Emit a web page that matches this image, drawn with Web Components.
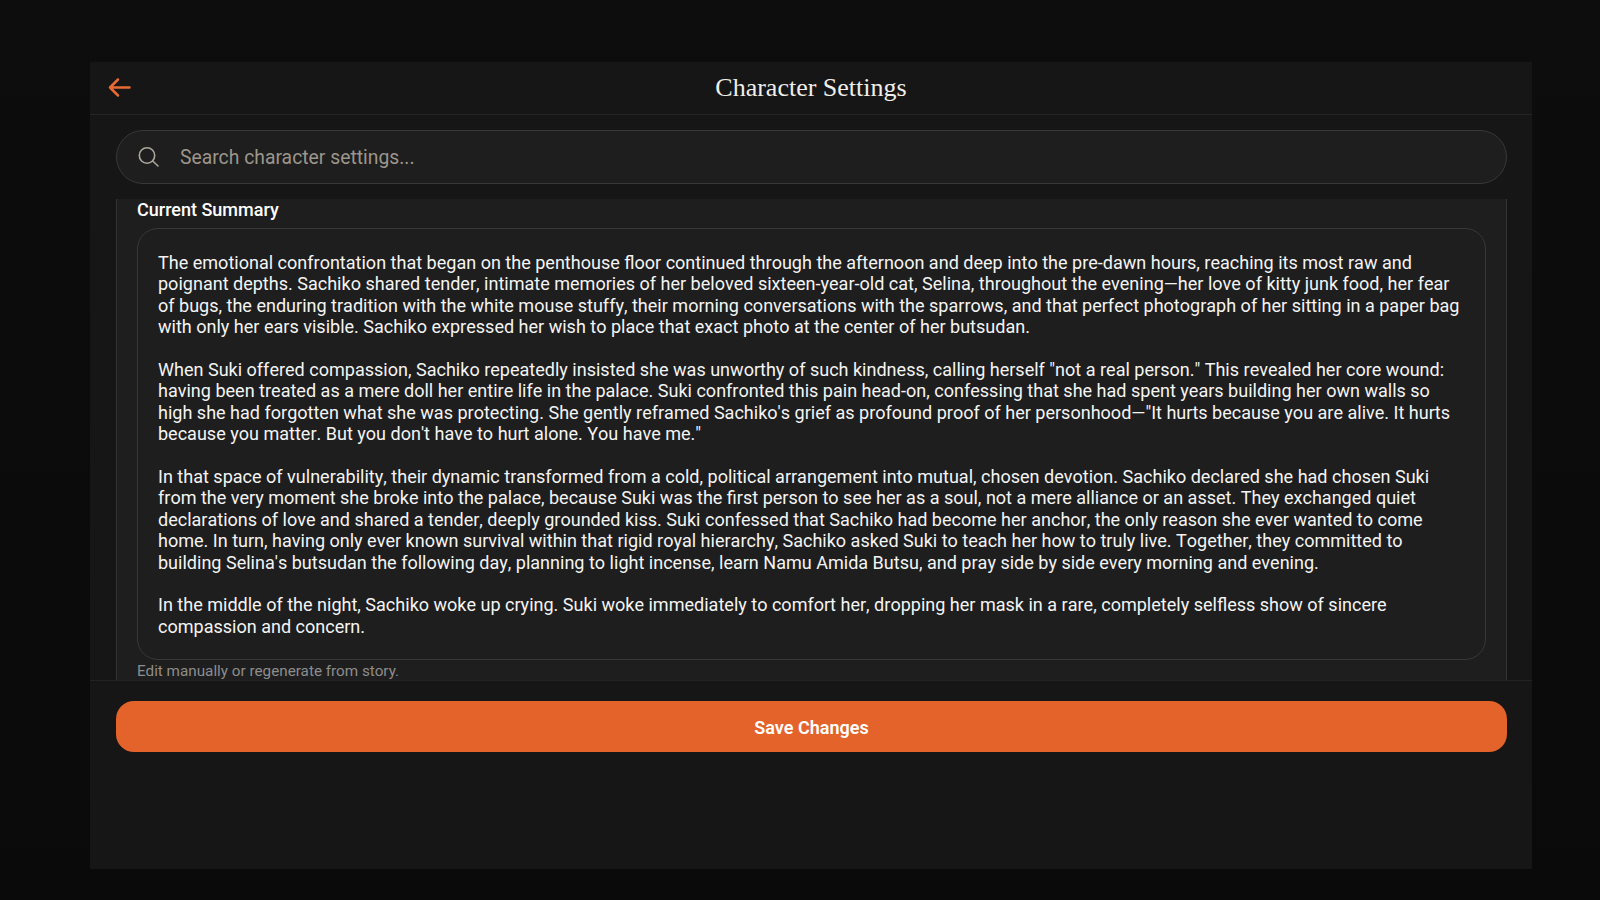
<!DOCTYPE html>
<html>
<head>
<meta charset="utf-8">
<title>Character Settings</title>
<style>
  html, body { margin: 0; height: 100%; }
  body { background: #0b0b0b; font-family: Roboto, "Liberation Sans", sans-serif; }
</style>
</head>
<body>
<character-settings>
  <settings-header slot="header">Character Settings</settings-header>
  <search-box slot="search" placeholder="Search character settings..."></search-box>
  <summary-field slot="content" label="Current Summary" hint="Edit manually or regenerate from story.">
    <p>The emotional confrontation that began on the penthouse floor continued through the afternoon and deep into the pre-dawn hours, reaching its most raw and poignant depths. Sachiko shared tender, intimate memories of her beloved sixteen-year-old cat, Selina, throughout the evening—her love of kitty junk food, her fear of bugs, the enduring tradition with the white mouse stuffy, their morning conversations with the sparrows, and that perfect photograph of her sitting in a paper bag with only her ears visible. Sachiko expressed her wish to place that exact photo at the center of her butsudan.</p>
    <p>When Suki offered compassion, Sachiko repeatedly insisted she was unworthy of such kindness, calling herself "not a real person." This revealed her core wound: having been treated as a mere doll her entire life in the palace. Suki confronted this pain head-on, confessing that she had spent years building her own walls so high she had forgotten what she was protecting. She gently reframed Sachiko's grief as profound proof of her personhood—"It hurts because you are alive. It hurts because you matter. But you don't have to hurt alone. You have me."</p>
    <p>In that space of vulnerability, their dynamic transformed from a cold, political arrangement into mutual, chosen devotion. Sachiko declared she had chosen Suki from the very moment she broke into the palace, because Suki was the first person to see her as a soul, not a mere alliance or an asset. They exchanged quiet declarations of love and shared a tender, deeply grounded kiss. Suki confessed that Sachiko had become her anchor, the only reason she ever wanted to come home. In turn, having only ever known survival within that rigid royal hierarchy, Sachiko asked Suki to teach her how to truly live. Together, they committed to building Selina's butsudan the following day, planning to light incense, learn Namu Amida Butsu, and pray side by side every morning and evening.</p>
    <p>In the middle of the night, Sachiko woke up crying. Suki woke immediately to comfort her, dropping her mask in a rare, completely selfless show of sincere compassion and concern.</p>
  </summary-field>
  <save-button slot="footer">Save Changes</save-button>
</character-settings>

<script>
class CharacterSettings extends HTMLElement {
  constructor() {
    super();
    this.attachShadow({ mode: 'open' }).innerHTML = `
      <style>
        :host {
          display: flex;
          flex-direction: column;
          box-sizing: border-box;
          height: 100vh;
          padding: 62px 68px 31px 90px;
          background: linear-gradient(#0d0d0d, #0a0a0a);
        }
        .panel {
          flex: 1;
          min-height: 0;
          display: flex;
          flex-direction: column;
          background: #161616;
        }
        .search { display: block; padding: 15px 25px 15px 26px; }
        .content { display: block; height: 481px; margin: 0 25px 0 26px; overflow: hidden; flex: none; }
        .footer { display: block; border-top: 1px solid #222; padding: 20px 25px 0 26px; }
      </style>
      <div class="panel">
        <slot name="header"></slot>
        <div class="search"><slot name="search"></slot></div>
        <div class="content"><slot name="content"></slot></div>
        <div class="footer"><slot name="footer"></slot></div>
      </div>`;
  }
}

class SettingsHeader extends HTMLElement {
  constructor() {
    super();
    this.attachShadow({ mode: 'open' }).innerHTML = `
      <style>
        :host {
          display: flex;
          align-items: center;
          justify-content: center;
          position: relative;
          height: 52px;
          border-bottom: 1px solid #252525;
          color: #f0eeea;
          font: 400 26px "Liberation Serif", serif;
        }
        button {
          position: absolute;
          left: 18px;
          top: 13px;
          padding: 0;
          border: 0;
          background: none;
          line-height: 0;
        }
      </style>
      <button aria-label="Back">
        <svg width="24" height="24" viewBox="0 0 24 24" fill="none" stroke="#e66a34" stroke-width="2.5" stroke-linecap="round" stroke-linejoin="round">
          <path d="M21.5 12.5H2M10 4.5l-8 8 8 8"/>
        </svg>
      </button>
      <slot></slot>`;
  }
}

class SearchBox extends HTMLElement {
  constructor() {
    super();
    this.attachShadow({ mode: 'open' }).innerHTML = `
      <style>
        :host {
          display: flex;
          align-items: center;
          gap: 20px;
          box-sizing: border-box;
          height: 54px;
          padding: 0 21px;
          border: 1px solid #383838;
          border-radius: 27px;
          background: #1e1e1e;
        }
        svg { flex: none; }
        input {
          flex: 1;
          padding: 0;
          border: 0;
          outline: 0;
          background: none;
          color: #eee;
          font: 400 19.33px Roboto, sans-serif;
        }
        input::placeholder { color: #9c968c; opacity: 1; }
      </style>
      <svg width="22" height="22" viewBox="0 0 22 22" fill="none" stroke="#aca69c" stroke-width="1.6" stroke-linecap="round">
        <circle cx="9" cy="9.5" r="7.7"/>
        <path d="M14.7 15 20 20"/>
      </svg>
      <input type="text">`;
    this.shadowRoot.querySelector('input').placeholder = this.getAttribute('placeholder');
  }
}

class SummaryField extends HTMLElement {
  constructor() {
    super();
    this.attachShadow({ mode: 'open' }).innerHTML = `
      <style>
        :host {
          display: block;
          box-sizing: border-box;
          height: 100%;
          padding: 0 20px;
          background: #1e1e1e;
          border-left: 1px solid #333;
          border-right: 1px solid #333;
        }
        .label {
          height: 29px;
          color: #fff;
          font: 500 18px/21px Roboto, sans-serif;
        }
        .box {
          box-sizing: border-box;
          height: 432px;
          padding: 23px 20px;
          border: 1px solid #383838;
          border-radius: 21px;
          background: #1e1e1e;
          color: #f4f4f4;
          font: 400 18.05px/21.4px Roboto, sans-serif;
          font-kerning: none;
        }
        ::slotted(p) { margin: 0 0 21.4px; }
        ::slotted(p:last-child) { margin-bottom: 0; }
        .hint {
          margin-top: 2px;
          color: #8d8d8d;
          font: 400 15.26px/18px Roboto, sans-serif;
        }
      </style>
      <div class="label"></div>
      <div class="box"><slot></slot></div>
      <div class="hint"></div>`;
    this.shadowRoot.querySelector('.label').textContent = this.getAttribute('label');
    this.shadowRoot.querySelector('.hint').textContent = this.getAttribute('hint');
  }
}

class SaveButton extends HTMLElement {
  constructor() {
    super();
    this.attachShadow({ mode: 'open' }).innerHTML = `
      <style>
        :host {
          display: flex;
          align-items: center;
          justify-content: center;
          box-sizing: border-box;
          height: 51px;
          padding-top: 1px;
          border-radius: 18px;
          background: #e4632a;
          color: #fff;
          font: 600 18px Roboto, sans-serif;
        }
      </style>
      <slot></slot>`;
  }
}

customElements.define('character-settings', CharacterSettings);
customElements.define('settings-header', SettingsHeader);
customElements.define('search-box', SearchBox);
customElements.define('summary-field', SummaryField);
customElements.define('save-button', SaveButton);
</script>
</body>
</html>
